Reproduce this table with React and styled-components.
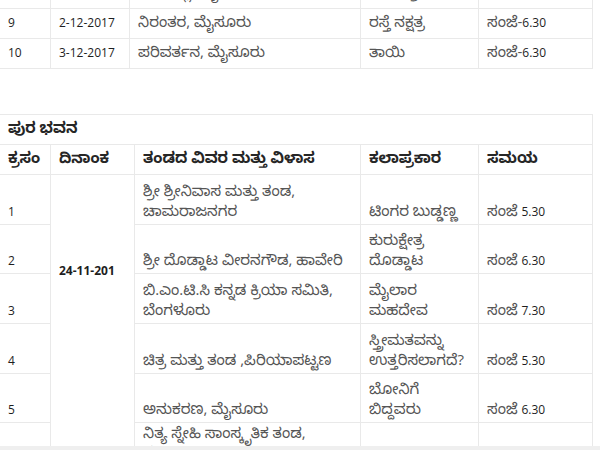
import React from 'react';
import styled, { createGlobalStyle } from 'styled-components';

const GlobalStyle = createGlobalStyle`
  html, body {
    margin: 0;
    padding: 0;
    background: #ffffff;
    overflow: hidden;
  }
  body {
    font-family: "Open Sans", "Noto Sans Kannada", "Noto Sans", sans-serif;
    font-size: 12px;
    color: #222222;
  }
`;

const Page = styled.div`
  width: 600px;
  height: 450px;
  overflow: hidden;
  position: relative;
  display: flex;
  flex-direction: column;
  gap: 45px;
`;

const Table = styled.table`
  border-collapse: collapse;
  table-layout: fixed;
  width: 593px;
  margin-left: -1px;
  margin-top: ${(props) => props.offset || 0}px;
`;

const Row = styled.tr`
  height: ${(props) => props.h}px;
`;

const Cell = styled.td`
  border: 1px solid #e9e9e9;
  padding: ${(props) => (props.pt ? `${props.pt}px` : '0')} 8px 3px 8px;
  vertical-align: ${(props) => props.valign || 'bottom'};
  line-height: 19px;
  font-weight: ${(props) => (props.bold ? 700 : 400)};
  color: #1e1e1e;
  white-space: nowrap;
  overflow: hidden;
`;

const Num = styled.span`
  color: #1e1e1e;
`;

const Kn = styled.span`
  font-size: 15px;
  color: ${(props) => (props.strong ? '#262626' : '#555555')};
`;

const BottomBar = styled.div`
  position: absolute;
  left: 0;
  right: 0;
  bottom: 0;
  height: 4px;
  background: #efefef;
`;

const cols = [51, 79, 231, 118, 114];
const cols2 = [51, 84, 226, 118, 114];

const Cols = ({ widths }) => (
  <colgroup>
    {widths.map((w, i) => (
      <col key={i} style={{ width: w }} />
    ))}
  </colgroup>
);

const Time = ({ sep, t }) => (
  <>
    <Kn>ಸಂಜೆ{sep}</Kn>
    <Num>{t}</Num>
  </>
);

const lines = (arr) =>
  arr.map((l, i) => (
    <React.Fragment key={i}>
      {i > 0 && <br />}
      {l}
    </React.Fragment>
  ));

const topRows = [
  ['', '', 'ರಂಗವಲ್ಲಿ, ಮೈಸೂರು', 'ಕಾಲಚಕ್ರ', ''],
  ['9', '2-12-2017', 'ನಿರಂತರ, ಮೈಸೂರು', 'ರಸ್ತೆ ನಕ್ಷತ್ರ', '6.30'],
  ['10', '3-12-2017', 'ಪರಿವರ್ತನ, ಮೈಸೂರು', 'ತಾಯಿ', '6.30'],
];

const shows = [
  { n: '1', h: 50, team: ['ಶ್ರೀ ಶ್ರೀನಿವಾಸ ಮತ್ತು ತಂಡ,', 'ಚಾಮರಾಜನಗರ'], play: ['ಟಿಂಗರ ಬುಡ್ಡಣ್ಣ'], t: '5.30' },
  { n: '2', h: 49, team: ['ಶ್ರೀ ದೊಡ್ಡಾಟ ವೀರನಗೌಡ, ಹಾವೇರಿ'], play: ['ಕುರುಕ್ಷೇತ್ರ', 'ದೊಡ್ಡಾಟ'], t: '6.30' },
  { n: '3', h: 50, team: ['ಬಿ.ಎಂ.ಟಿ.ಸಿ ಕನ್ನಡ ಕ್ರಿಯಾ ಸಮಿತಿ,', 'ಬೆಂಗಳೂರು'], play: ['ಮೈಲಾರ', 'ಮಹದೇವ'], t: '7.30' },
  { n: '4', h: 50, team: ['ಚಿತ್ರ ಮತ್ತು ತಂಡ ,ಪಿರಿಯಾಪಟ್ಟಣ'], play: ['ಸ್ತ್ರೀಮತವನ್ನು', 'ಉತ್ತರಿಸಲಾಗದೆ?'], t: '5.30' },
  { n: '5', h: 49, team: ['ಅನುಕರಣ, ಮೈಸೂರು'], play: ['ಬೋನಿಗೆ', 'ಬಿದ್ದವರು'], t: '6.30' },
  { n: '', h: 50, team: ['ನಿತ್ಯ ಸ್ನೇಹಿ ಸಾಂಸ್ಕೃತಿಕ ತಂಡ,', 'ಮೈಸೂರು'], play: [''], t: '', top: true },
];

export default function App() {
  return (
    <>
      <GlobalStyle />
      <Page>
        <Table offset={-22}>
          <Cols widths={cols} />
          <tbody>
            {topRows.map((r, i) => (
              <Row h={30} key={i}>
                <Cell valign="middle"><Num>{r[0]}</Num></Cell>
                <Cell valign="middle"><Num>{r[1]}</Num></Cell>
                <Cell valign="middle"><Kn>{r[2]}</Kn></Cell>
                <Cell valign="middle"><Kn>{r[3]}</Kn></Cell>
                <Cell valign="middle">{r[4] && <Time sep="-" t={r[4]} />}</Cell>
              </Row>
            ))}
          </tbody>
        </Table>

        <Table>
          <Cols widths={cols2} />
          <tbody>
            <Row h={30}>
              <Cell colSpan={5} bold valign="middle"><Kn strong>ಪುರ ಭವನ</Kn></Cell>
            </Row>
            <Row h={30}>
              <Cell bold valign="middle"><Kn strong>ಕ್ರಸಂ</Kn></Cell>
              <Cell bold valign="middle"><Kn strong>ದಿನಾಂಕ</Kn></Cell>
              <Cell bold valign="middle"><Kn strong>ತಂಡದ ವಿವರ ಮತ್ತು ವಿಳಾಸ</Kn></Cell>
              <Cell bold valign="middle"><Kn strong>ಕಲಾಪ್ರಕಾರ</Kn></Cell>
              <Cell bold valign="middle"><Kn strong>ಸಮಯ</Kn></Cell>
            </Row>
            {shows.map((s, i) => (
              <Row h={s.h} key={i}>
                <Cell><Num>{s.n}</Num></Cell>
                {i === 0 && (
                  <Cell rowSpan={shows.length} bold valign="top" pt={86}>
                    24-11-201
                  </Cell>
                )}
                <Cell valign={s.top ? 'top' : 'bottom'}>
                  <Kn>{lines(s.team)}</Kn>
                </Cell>
                <Cell><Kn>{lines(s.play)}</Kn></Cell>
                <Cell>{s.t && <Time sep=" " t={s.t} />}</Cell>
              </Row>
            ))}
          </tbody>
        </Table>
        <BottomBar />
      </Page>
    </>
  );
}
